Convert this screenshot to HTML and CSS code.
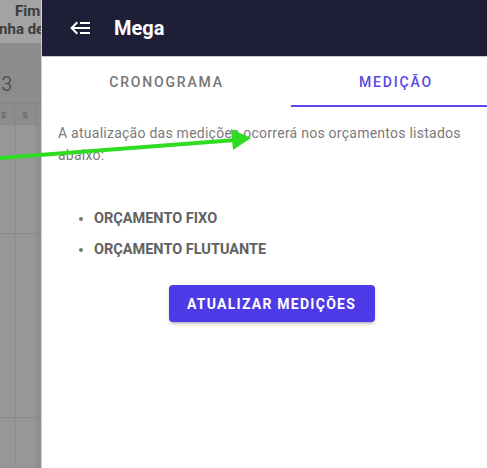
FILE: index.html
```html
<!DOCTYPE html>
<html lang="pt-BR">
<head>
    <meta charset="UTF-8">
    <meta name="viewport" content="width=device-width, initial-scale=1.0">
    <link rel="stylesheet" href="styles.css">
</head>
<body>
    <div class="page">
        <div class="backdrop">
            <div class="bg-title">
                <div class="bg-line first">Fim</div>
                <div class="bg-line second">Linha de base</div>
            </div>
            <div class="bg-band">
                <div class="bg-num">13</div>
                <div class="bg-days">
                    <span>s</span>
                    <span>s</span>
                </div>
            </div>
            <div class="bg-grid">
                <div class="bg-row"></div>
                <div class="bg-row last"></div>
            </div>
        </div>

        <div class="drawer">
            <div class="drawer-header">
                <svg class="back-icon" viewBox="0 0 24 24" width="24" height="24">
                    <path fill="#fff" d="M5,13L9,17L7.6,18.42L1.18,12L7.6,5.58L9,7L5,11H21V13H5M21,6V8H11V6H21M21,16V18H11V16H21Z"/>
                </svg>
                <h1>Mega</h1>
            </div>
            <div class="tabs">
                <div class="tab tab-first">Cronograma</div>
                <div class="tab tab-second active">Medição</div>
            </div>
            <div class="content">
                <p class="info">A atualização das medições ocorrerá nos orçamentos listados abaixo:</p>
                <ul class="budget-list">
                    <li>Orçamento Fixo</li>
                    <li>Orçamento Flutuante</li>
                </ul>
                <div class="actions">
                    <button class="btn-update">Atualizar Medições</button>
                </div>
            </div>
        </div>

        <svg class="annotation" width="487" height="468" viewBox="0 0 487 468">
            <line x1="0" y1="158" x2="236" y2="140" stroke="#2fdc1f" stroke-width="4"/>
            <polygon points="231,129 251,138 233,150" fill="#2fdc1f"/>
        </svg>
    </div>
</body>
</html>
```

FILE: styles.css
```css
body {
    margin: 0;
    padding: 0;
    font-family: Roboto, "Noto Sans", sans-serif;
    overflow: hidden;
}
.page {
    position: relative;
    display: flex;
    width: 487px;
    height: 468px;
    overflow: hidden;
}
.backdrop {
    width: 41px;
    flex-shrink: 0;
    display: flex;
    flex-direction: column;
    background-color: #979797;
    overflow: hidden;
    box-shadow: inset -5px 0 4px -2px rgba(0,0,0,0.12);
}
.bg-title {
    height: 43px;
    background-color: #a3a3a3;
    font-weight: bold;
    font-size: 15px;
    color: #3c3c3c;
    white-space: nowrap;
}
.bg-line.first {
    padding-left: 15px;
    line-height: 18px;
    padding-top: 2px;
}
.bg-line.second {
    margin-left: -13px;
    line-height: 18px;
}
.bg-band {
    background-color: #8c8c8c;
    height: 82px;
    display: flex;
    flex-direction: column;
}
.bg-num {
    margin-left: -10px;
    margin-top: 30px;
    font-size: 20px;
    color: #565656;
    line-height: 22px;
}
.bg-days {
    margin-top: 8px;
    display: flex;
    height: 22px;
    border-top: 1px solid #858585;
    font-size: 10px;
    color: #5e5e5e;
    line-height: 22px;
}
.bg-days span {
    width: 21px;
    text-align: center;
    border-right: 1px solid #858585;
    box-sizing: border-box;
}
.bg-days span:first-child {
    width: 15px;
    text-align: left;
    padding-left: 1px;
}
.bg-grid {
    flex: 1;
    background: linear-gradient(to right, transparent 15px, #8e8e8e 15px, #8e8e8e 16px, transparent 16px, transparent 36px, #8e8e8e 36px);
}
.bg-row {
    height: 108px;
    border-bottom: 1px solid #888;
}
.bg-row.last {
    height: 183px;
}
.drawer {
    width: 460px;
    flex-shrink: 0;
    background-color: white;
    border-left: 1px solid #d0d0d0;
    box-sizing: border-box;
}
.drawer-header {
    height: 57px;
    background-color: #1e1e36;
    display: flex;
    align-items: center;
    padding-left: 27px;
    border-bottom: 1px solid #c8c8c8;
    box-sizing: border-box;
}
.back-icon {
    margin-right: 21px;
}
.drawer-header h1 {
    margin: 0;
    font-size: 20px;
    font-weight: bold;
    color: white;
}
.tabs {
    display: flex;
    height: 50px;
}
.tab {
    display: flex;
    align-items: center;
    justify-content: center;
    text-transform: uppercase;
    font-size: 14px;
    font-weight: 500;
    letter-spacing: 0.13em;
    color: #767676;
    box-sizing: border-box;
}
.tab-first {
    width: 249px;
}
.tab-second {
    width: 210px;
}
.tab.active {
    color: #5a48e8;
    border-bottom: 2px solid #5a48e8;
    padding-top: 2px;
}
.content {
    padding: 15px 16px 0 16px;
}
.info {
    margin: 0;
    font-size: 14px;
    line-height: 22px;
    letter-spacing: 0.25px;
    color: #7a7a7a;
}
.budget-list {
    margin: 44px 0 0 0;
    padding-left: 36px;
    font-size: 14.5px;
    font-weight: bold;
    text-transform: uppercase;
    color: #616161;
}
.budget-list li {
    line-height: 18px;
    margin-bottom: 13px;
}
.budget-list li::marker {
    color: #777;
    font-size: 13px;
}
.actions {
    display: flex;
    justify-content: center;
    margin-top: 26px;
}
.btn-update {
    width: 206px;
    height: 37px;
    border: none;
    border-radius: 4px;
    background-color: #4c3ae6;
    color: white;
    font-family: Roboto, sans-serif;
    font-size: 14px;
    font-weight: bold;
    letter-spacing: 0.09em;
    text-transform: uppercase;
    box-shadow: 0 3px 3px -2px rgba(0,0,0,0.25), 0 2px 4px rgba(0,0,0,0.14);
    cursor: pointer;
}
.annotation {
    position: absolute;
    left: 0;
    top: 0;
    pointer-events: none;
}
```
